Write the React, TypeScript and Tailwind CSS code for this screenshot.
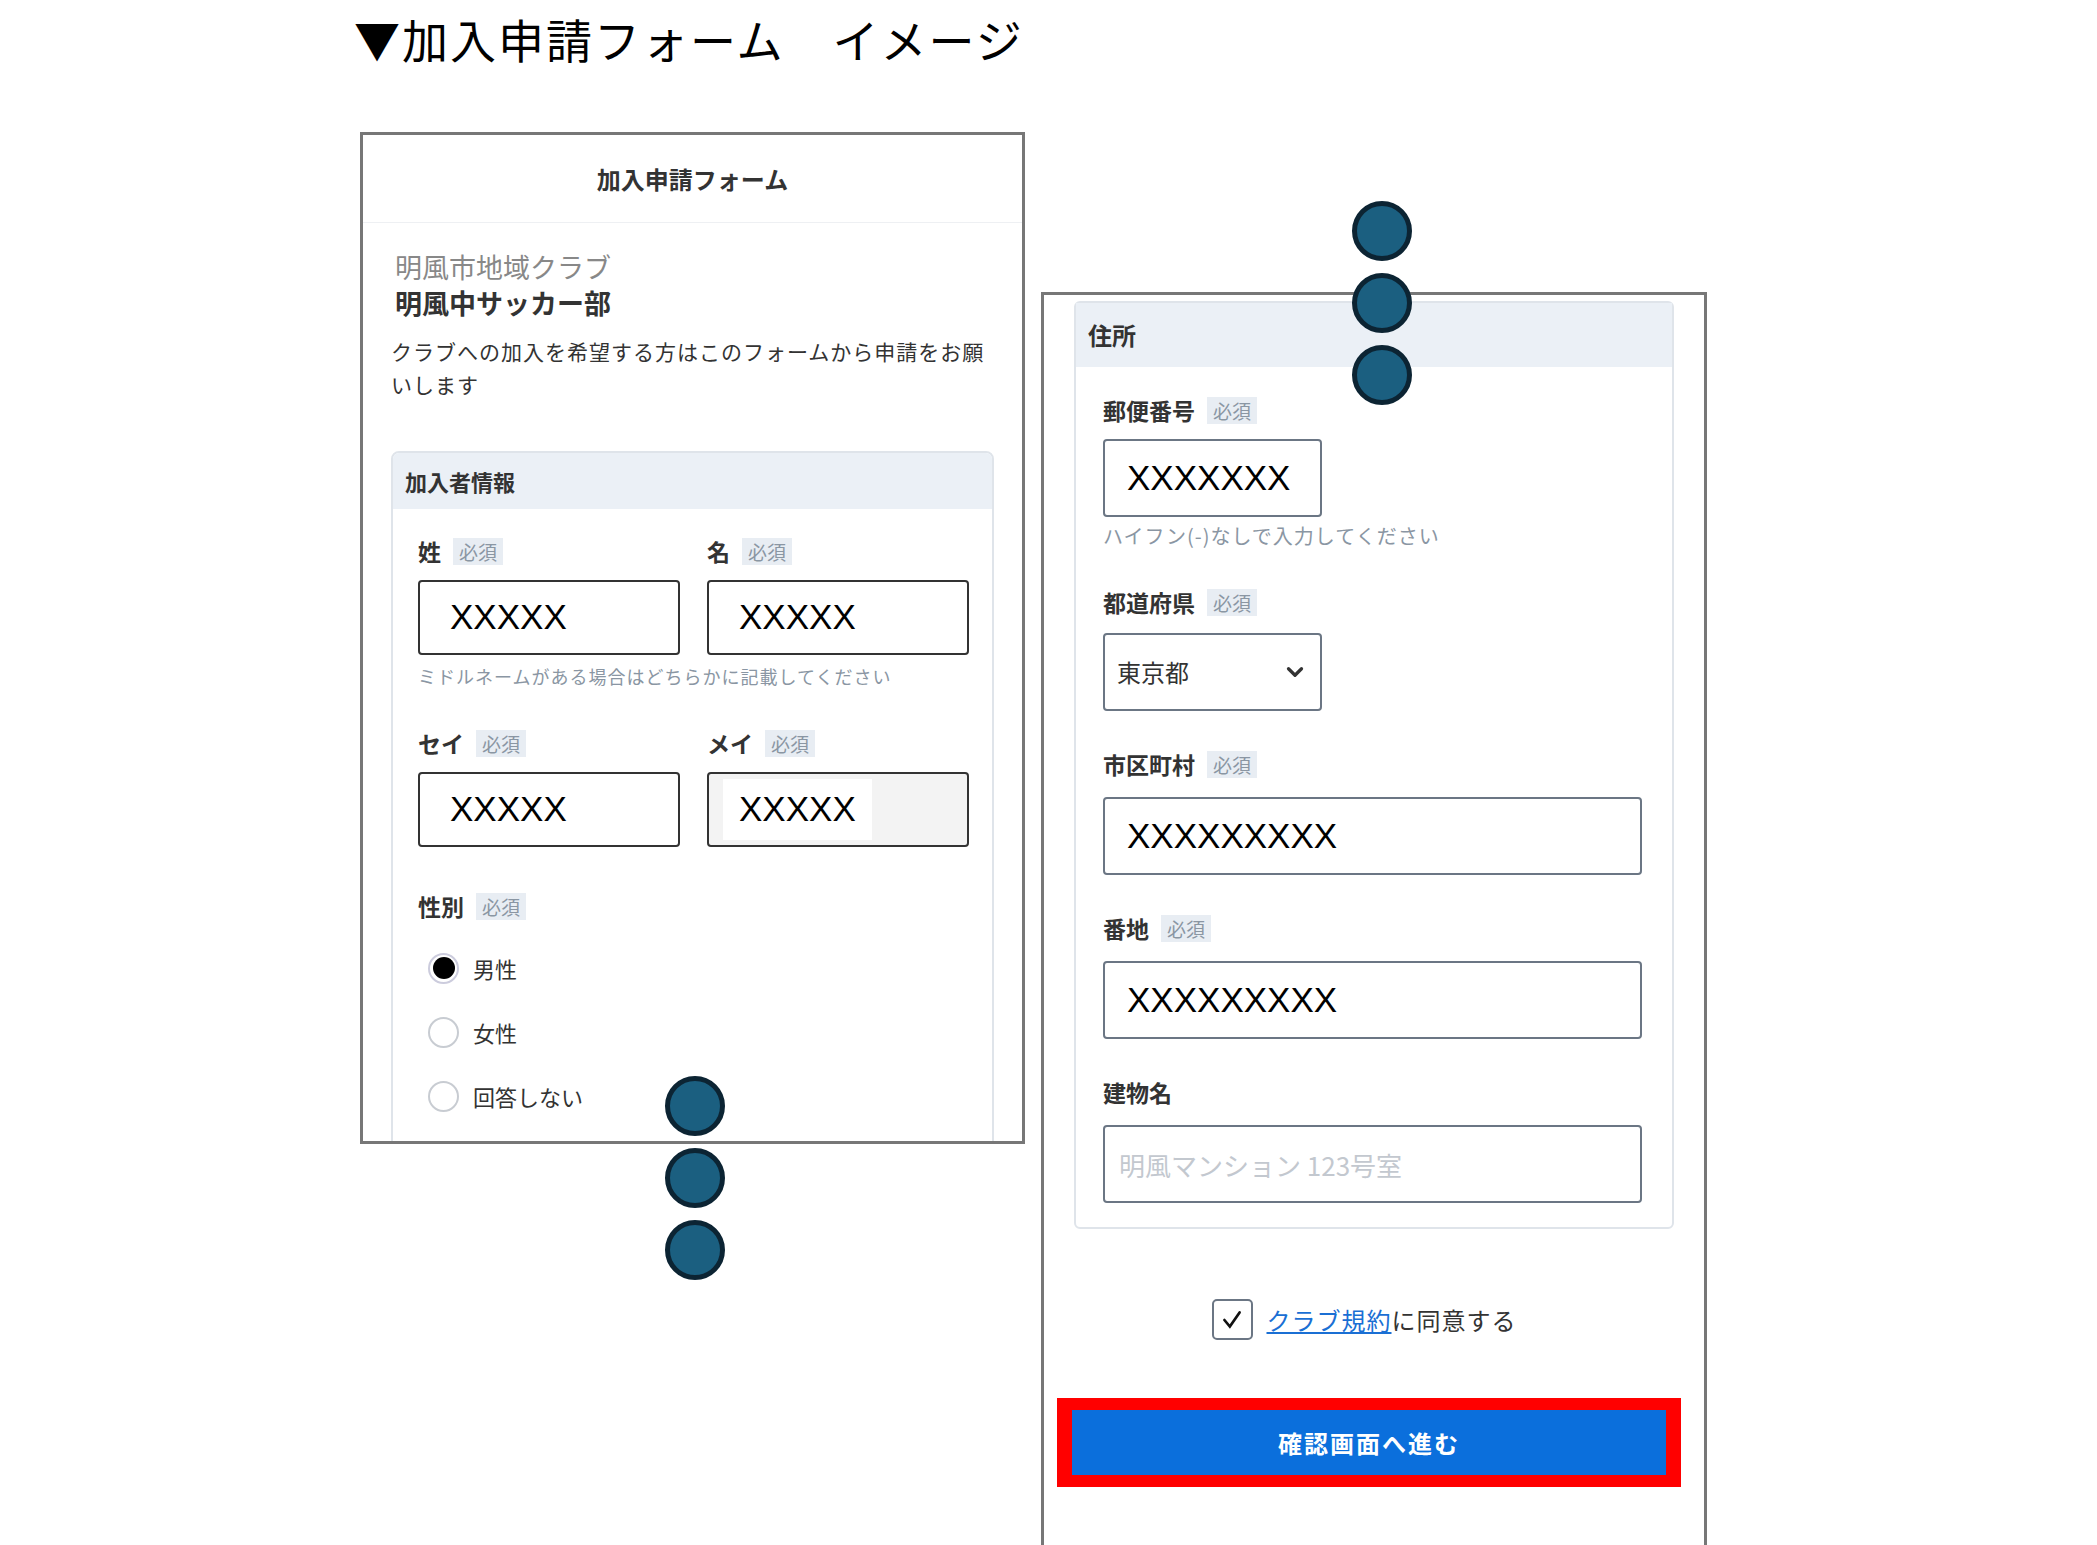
import React from "react";

const F = { fontFamily: '"Noto Sans CJK JP", "Noto Sans", sans-serif' };
const X = { fontFamily: '"Liberation Sans", "Noto Sans CJK JP", sans-serif' };

function Req() {
  return <span className="ml-3 bg-[#e8edf3] px-1.5 text-[19px] leading-[27px] text-[#8a96a3] font-normal">必須</span>;
}
function Label({ t, req = true }: { t: string; req?: boolean }) {
  return (
    <div className="flex items-center text-[23px] font-bold text-[#333] h-[30px]">
      {t}
      {req && <Req />}
    </div>
  );
}
function XInput({ v, w, h, gray }: { v: string; w: string; h: string; gray?: boolean }) {
  return (
    <div className={`${w} ${h} border-2 border-[#333] rounded-[4px] flex items-center pl-[14px] ${gray ? "bg-[#f3f3f3]" : "bg-white"}`}>
      <span className={`text-[35px] text-black px-[16px] bg-white ${gray ? "py-1" : ""}`} style={X}>{v}</span>
    </div>
  );
}
function Dot() {
  return <div className="w-[60px] h-[60px] rounded-full bg-[#1b5f80] border-[5px] border-[#0c2433]" />;
}
function Radio({ on, t }: { on?: boolean; t: string }) {
  return (
    <div className="flex items-center gap-[14px] h-[30px]">
      <div className={`w-[31px] h-[31px] rounded-full border-2 ${on ? "border-[#ccd] bg-white flex items-center justify-center" : "border-[#c8ccd2]"}`}>
        {on && <div className="w-[22px] h-[22px] rounded-full bg-black" />}
      </div>
      <span className="text-[22px] text-[#333]">{t}</span>
    </div>
  );
}
function AInput({ v, w = "w-[539px]", ph }: { v: string; w?: string; ph?: boolean }) {
  return (
    <div className={`${w} h-[78px] border-2 border-[#6b7684] rounded-[4px] flex items-center pl-[22px]`}>
      {ph ? <span className="text-[26px] text-[#c3c8cf] -ml-[8px]">{v}</span> : <span className="text-[35px] text-black" style={X}>{v}</span>}
    </div>
  );
}

export default function App() {
  return (
    <div className="w-[2097px] h-[1545px] bg-white overflow-hidden relative" style={F}>
      <div className="pl-[354px] pt-[6px] text-[46px] text-black leading-[64px] tracking-[2px]">▼加入申請フォーム　イメージ</div>
      <div className="flex items-start pl-[360px] gap-[16px] mt-[62px]">
        {/* Left frame */}
        <div className="w-[665px] h-[1012px] border-[3px] border-[#777] overflow-hidden shrink-0">
          <div className="h-[88px] border-b border-[#eef0f3] flex items-center justify-center text-[24px] font-bold text-[#333]">加入申請フォーム</div>
          <div className="px-[28px] pt-[26px]">
            <div className="pl-[4px] text-[27px] text-[#888] leading-[36px]">明風市地域クラブ</div>
            <div className="pl-[4px] text-[27px] font-bold text-[#333] leading-[36px]">明風中サッカー部</div>
            <div className="mt-[14px] text-[21px] text-[#333] leading-[33px] tracking-[1px]">クラブへの加入を希望する方はこのフォームから申請をお願いします</div>
            <div className="mt-[50px] border-2 border-[#dfe4ea] rounded-[8px] h-[700px]">
              <div className="h-[56px] bg-[#ebf0f6] rounded-t-[6px] flex items-center pl-[12px] text-[22px] font-bold text-[#333]">加入者情報</div>
              <div className="px-[25px] pt-[27px]">
                <div className="flex gap-[27px]">
                  <div className="flex flex-col gap-[14px]"><Label t="姓" /><XInput v="XXXXX" w="w-[262px]" h="h-[75px]" /></div>
                  <div className="flex flex-col gap-[14px]"><Label t="名" /><XInput v="XXXXX" w="w-[262px]" h="h-[75px]" /></div>
                </div>
                <div className="mt-[8px] text-[18px] text-[#8a96a3] tracking-[1px]">ミドルネームがある場合はどちらかに記載してください</div>
                <div className="flex gap-[27px] mt-[38px]">
                  <div className="flex flex-col gap-[14px]"><Label t="セイ" /><XInput v="XXXXX" w="w-[262px]" h="h-[75px]" /></div>
                  <div className="flex flex-col gap-[14px]"><Label t="メイ" /><XInput v="XXXXX" w="w-[262px]" h="h-[75px]" gray /></div>
                </div>
                <div className="mt-[44px]"><Label t="性別" /></div>
                <div className="mt-[32px] pl-[10px] flex flex-col gap-[34px]">
                  <Radio on t="男性" />
                  <Radio t="女性" />
                  <Radio t="回答しない" />
                </div>
              </div>
            </div>
          </div>
        </div>
        {/* Right frame */}
        <div className="w-[666px] h-[1300px] mt-[160px] border-[3px] border-[#777] shrink-0 px-[30px] pt-[6px]">
          <div className="border-2 border-[#dfe4ea] rounded-[6px] pb-[24px]">
            <div className="h-[64px] bg-[#ebf0f6] flex items-center pl-[12px] text-[24px] font-bold text-[#333]">住所</div>
            <div className="px-[27px] pt-[28px] flex flex-col">
              <Label t="郵便番号" />
              <div className="mt-[14px]"><AInput v="XXXXXXX" w="w-[219px]" /></div>
              <div className="mt-[4px] text-[20px] text-[#8a96a3] tracking-[1px]">ハイフン(-)なしで入力してください</div>
              <div className="mt-[36px]"><Label t="都道府県" /></div>
              <div className="mt-[16px] w-[219px] h-[78px] border-2 border-[#6b7684] rounded-[4px] flex items-center justify-between px-[12px]">
                <span className="text-[24px] text-[#333]">東京都</span>
                <svg width="26" height="26" viewBox="0 0 24 24" fill="none" stroke="#333" strokeWidth="3" strokeLinecap="round" strokeLinejoin="round"><path d="M6 9l6 6 6-6" /></svg>
              </div>
              <div className="mt-[38px]"><Label t="市区町村" /></div>
              <div className="mt-[18px]"><AInput v="XXXXXXXXX" /></div>
              <div className="mt-[38px]"><Label t="番地" /></div>
              <div className="mt-[18px]"><AInput v="XXXXXXXXX" /></div>
              <div className="mt-[38px]"><Label t="建物名" req={false} /></div>
              <div className="mt-[18px]"><AInput v="明風マンション 123号室" ph /></div>
            </div>
          </div>
          <div className="mt-[70px] flex items-center justify-center gap-[14px] pr-[20px]">
            <div className="w-[41px] h-[41px] border-2 border-[#6b7684] rounded-[5px] flex items-center justify-center">
              <svg width="26" height="26" viewBox="0 0 24 24" fill="none" stroke="#111" strokeWidth="2.5" strokeLinecap="round"><path d="M5 12l5 6L19 5" /></svg>
            </div>
            <span className="text-[24px] text-[#333] tracking-[1px]"><span className="text-[#1a6fd4] underline">クラブ規約</span>に同意する</span>
          </div>
          <div className="mt-[58px] -ml-[17px] w-[624px] h-[89px] bg-[#ff0000] flex items-center justify-center">
            <div className="w-[594px] h-[65px] bg-[#0b6fdc] flex items-center justify-center text-white text-[24px] font-bold tracking-[2px]">確認画面へ進む</div>
          </div>
        </div>
      </div>
      <div className="absolute left-[665px] top-[1076px] flex flex-col gap-[12px]"><Dot /><Dot /><Dot /></div>
      <div className="absolute left-[1352px] top-[201px] flex flex-col gap-[12px]"><Dot /><Dot /><Dot /></div>
    </div>
  );
}
